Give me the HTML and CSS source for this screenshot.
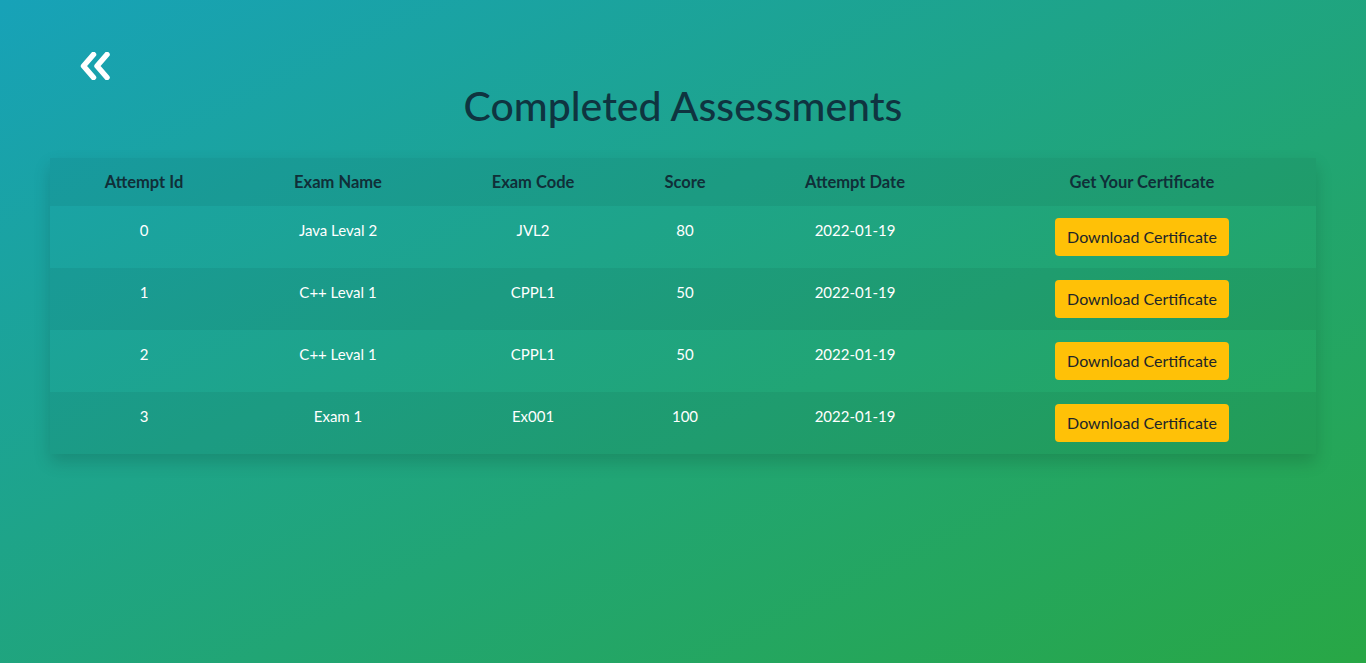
FILE: index.html
```html
<!DOCTYPE html>
<html lang="en">
<head>
<meta charset="utf-8">
<title>Completed Assessments</title>
<link rel="stylesheet" href="styles.css">
</head>
<body>
<div class="page">
  <div class="topbar">
    <a class="back" href="#" aria-label="Back">
      <svg width="32" height="28" viewBox="0 0 32 28"><path d="M13.5 2.5 L3.5 14 L13.5 25.5 M27 2.5 L17 14 L27 25.5" fill="none" stroke="#fff" stroke-width="5.5" stroke-linecap="round" stroke-linejoin="round"/></svg>
    </a>
  </div>
  <h1 class="title">Completed Assessments</h1>
  <table class="results">
    <colgroup>
      <col class="c1"><col class="c2"><col class="c3"><col class="c4"><col class="c5"><col class="c6">
    </colgroup>
    <thead>
      <tr><th>Attempt Id</th><th>Exam Name</th><th>Exam Code</th><th>Score</th><th>Attempt Date</th><th>Get Your Certificate</th></tr>
    </thead>
    <tbody>
      <tr><td>0</td><td>Java Leval 2</td><td>JVL2</td><td>80</td><td>2022-01-19</td><td><button class="btn">Download Certificate</button></td></tr>
      <tr><td>1</td><td>C++ Leval 1</td><td>CPPL1</td><td>50</td><td>2022-01-19</td><td><button class="btn">Download Certificate</button></td></tr>
      <tr><td>2</td><td>C++ Leval 1</td><td>CPPL1</td><td>50</td><td>2022-01-19</td><td><button class="btn">Download Certificate</button></td></tr>
      <tr><td>3</td><td>Exam 1</td><td>Ex001</td><td>100</td><td>2022-01-19</td><td><button class="btn">Download Certificate</button></td></tr>
    </tbody>
  </table>
</div>
</body>
</html>
```

FILE: styles.css
```css
html, body {
  margin: 0;
  height: 100%;
}
body {
  font-family: Lato, "Open Sans", sans-serif;
  background: linear-gradient(to bottom right, #17a2b8, #28a745);
  min-height: 663px;
}
.page {
  padding: 0 50px;
}
.topbar {
  padding-top: 52px;
  padding-left: 30px;
  height: 28px;
}
.back {
  display: inline-block;
  line-height: 0;
}
.title {
  margin: 2px 0 28px;
  text-align: center;
  font-size: 41px;
  font-weight: 500;
  line-height: 48px;
  color: #0f3440;
}
.results {
  width: 100%;
  border-collapse: collapse;
  box-shadow: 0 8px 16px rgba(0,0,0,0.15);
  color: #fff;
  font-size: 15px;
}
.c1 { width: 188px; }
.c2 { width: 200px; }
.c3 { width: 190px; }
.c4 { width: 114px; }
.c5 { width: 226px; }
.results th, .results td {
  text-align: center;
  vertical-align: top;
  padding: 12px;
  line-height: 24px;
}
.results th {
  color: #102f38;
  font-weight: 700;
  font-size: 16.5px;
  background: rgba(0,0,0,0.05);
}
.results tbody tr:nth-child(even) {
  background: rgba(0,0,0,0.05);
}
.btn {
  font-family: inherit;
  font-size: 16px;
  line-height: 24px;
  padding: 7px 12px;
  white-space: nowrap;
  border: 0;
  border-radius: 4px;
  background: #ffc107;
  color: #212529;
  cursor: pointer;
}
```
